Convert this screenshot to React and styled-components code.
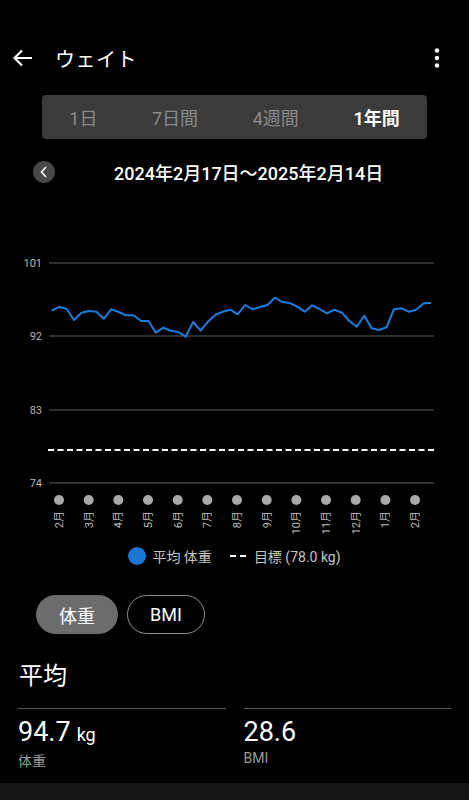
import { createGlobalStyle, styled } from "styled-components";

const GlobalStyle = createGlobalStyle`
    html, body {
        margin: 0;
        padding: 0;
        background: #000;
    }
    body {
        font-family: Roboto, "Noto Sans CJK JP", "Noto Sans", sans-serif;
        color: #fff;
    }
`

const Screen = styled.div`
    width: 469px;
    height: 800px;
    background: #000;
    display: flex;
    flex-direction: column;
    overflow: hidden;
`

const Header = styled.header`
    display: flex;
    align-items: center;
    height: 56px;
    margin-top: 30px;
    padding: 0 21px 0 12px;
`

const IconButton = styled.div`
    display: flex;
    align-items: center;
    justify-content: center;
    width: 22px;
    height: 24px;
`

const Title = styled.h1`
    flex: 1;
    margin: 0 0 0 21px;
    font-size: 20px;
    font-weight: 400;
    letter-spacing: 0.5px;
`

const Segmented = styled.nav`
    display: flex;
    justify-content: space-around;
    align-items: center;
    height: 44px;
    margin: 9px 42px 0 42px;
    border-radius: 4px;
    background: #3b3b3b;
`

const Segment = styled.span`
    font-size: 18px;
    font-weight: ${props => (props.$active ? 600 : 400)};
    color: ${props => (props.$active ? "#fff" : "#8a8a8a")};
`

const DateRow = styled.div`
    display: flex;
    align-items: center;
    height: 24px;
    margin-top: 21px;
    padding-left: 33px;
`

const RoundButton = styled.div`
    display: flex;
    align-items: center;
    justify-content: center;
    width: 22px;
    height: 22px;
    border-radius: 50%;
    background: #484848;
`

const DateText = styled.span`
    margin-left: 59px;
    font-size: 18px;
    font-weight: 500;
    white-space: nowrap;
`

const Chart = styled.svg`
    display: block;
    margin-top: 46px;
`

const Legend = styled.div`
    display: flex;
    justify-content: center;
    align-items: center;
    gap: 6px;
    margin-top: 2px;
    font-size: 14px;
    color: #c4c4c4;
`

const LegendDot = styled.span`
    width: 18px;
    height: 18px;
    border-radius: 50%;
    background: #1976d2;
`

const LegendDash = styled.span`
    width: 16px;
    height: 0;
    margin-left: 12px;
    margin-right: 2px;
    border-top: 2px dashed #fff;
`

const Chips = styled.div`
    display: flex;
    gap: 9px;
    margin-top: 29px;
    padding-left: 36px;
`

const Chip = styled.div`
    display: flex;
    align-items: center;
    justify-content: center;
    box-sizing: border-box;
    width: ${props => props.$width}px;
    height: 39px;
    border-radius: 20px;
    font-size: 18px;
    background: ${props => (props.$active ? "#6c6c6c" : "transparent")};
    border: 1px solid ${props => (props.$active ? "#6c6c6c" : "#8f8f8f")};
`

const SectionTitle = styled.h2`
    margin: 25px 0 0 19px;
    font-size: 24px;
    font-weight: 400;
    line-height: 34px;
`

const Stats = styled.div`
    display: grid;
    grid-template-columns: 1fr 1fr;
    gap: 18px;
    margin-top: 15px;
    padding: 0 18px;
`

const Stat = styled.div`
    border-top: 1px solid #555;
    padding-top: 6px;
`

const StatValue = styled.div`
    font-size: 27px;
    line-height: 34px;
    span {
        margin-left: 6px;
        font-size: 18px;
    }
`

const StatLabel = styled.div`
    font-size: 14px;
    color: #9a9a9a;
    line-height: 18px;
`

const BottomBar = styled.div`
    margin-top: auto;
    height: 17px;
    background: #131313;
`

// weekly averages traced from the reference (page y coordinates)
const zs = [212, 201, 206, 240, 218, 213, 215, 236, 208, 216, 226, 226, 243, 243, 278, 263, 272, 276, 290, 246, 272, 245, 224, 215, 209, 223, 195, 208, 201, 195, 173, 186, 189, 200, 215, 196, 207, 220, 209, 218, 243, 260, 227, 265, 270, 262, 208, 205, 215, 209, 190, 189]
const TOP = 230
const points = zs.map((z, i) => `${(51.7 + i * 7.44).toFixed(1)},${(240 + z / 3 - TOP).toFixed(1)}`).join(" ")

const grid = [
    { label: "101", y: 263 },
    { label: "92", y: 336 },
    { label: "83", y: 410 },
    { label: "74", y: 483 },
]

const months = ["2月", "3月", "4月", "5月", "6月", "7月", "8月", "9月", "10月", "11月", "12月", "1月", "2月"]

const WeightChart = () => (
    <Chart width="469" height="314" viewBox="0 0 469 314">
        {grid.map(g => (
            <g key={g.label}>
                <line x1="49" x2="434" y1={g.y - TOP} y2={g.y - TOP} stroke="#3e3e3e" strokeWidth="1.5" />
                <text x="42" y={g.y - TOP + 4} textAnchor="end" fontSize="11" fill="#b4b4b4" fontFamily="Roboto, sans-serif">{g.label}</text>
            </g>
        ))}
        <line x1="48" x2="434" y1={450 - TOP} y2={450 - TOP} stroke="#fff" strokeWidth="2" strokeDasharray="6 3.5" />
        <polyline points={points} fill="none" stroke="#1a7ddb" strokeWidth="2" strokeLinejoin="round" />
        {months.map((m, i) => {
            const x = 59 + i * 29.67
            return (
                <g key={i}>
                    <circle cx={x} cy={500 - TOP} r="5" fill="#a9a9a9" />
                    <text
                        transform={`translate(${x + 4}, ${511 - TOP}) rotate(-90)`}
                        textAnchor="end"
                        fontSize="11"
                        fill="#bdbdbd"
                        fontFamily="Roboto, 'Noto Sans CJK JP', sans-serif"
                    >
                        {m}
                    </text>
                </g>
            )
        })}
    </Chart>
)

const App = () => {
    return (
        <Screen>
            <GlobalStyle />
            <Header>
                <IconButton>
                    <svg width="20" height="18" viewBox="0 0 20 18">
                        <path d="M19 9H2M9 1.5L1.5 9L9 16.5" fill="none" stroke="#fff" strokeWidth="2.2" />
                    </svg>
                </IconButton>
                <Title>ウェイト</Title>
                <IconButton>
                    <svg width="6" height="20" viewBox="0 0 6 20">
                        <circle cx="3" cy="2.5" r="2.2" fill="#fff" />
                        <circle cx="3" cy="10" r="2.2" fill="#fff" />
                        <circle cx="3" cy="17.5" r="2.2" fill="#fff" />
                    </svg>
                </IconButton>
            </Header>

            <Segmented>
                <Segment>1日</Segment>
                <Segment>7日間</Segment>
                <Segment>4週間</Segment>
                <Segment $active>1年間</Segment>
            </Segmented>

            <DateRow>
                <RoundButton>
                    <svg width="10" height="12" viewBox="0 0 10 12">
                        <path d="M7 1L2.5 6L7 11" fill="none" stroke="#fff" strokeWidth="1.6" />
                    </svg>
                </RoundButton>
                <DateText>2024年2月17日～2025年2月14日</DateText>
            </DateRow>

            <WeightChart />

            <Legend>
                <LegendDot />
                <span>平均 体重</span>
                <LegendDash />
                <span>目標 (78.0 kg)</span>
            </Legend>

            <Chips>
                <Chip $active $width={82}>体重</Chip>
                <Chip $width={78}>BMI</Chip>
            </Chips>

            <SectionTitle>平均</SectionTitle>

            <Stats>
                <Stat>
                    <StatValue>94.7<span>kg</span></StatValue>
                    <StatLabel>体重</StatLabel>
                </Stat>
                <Stat>
                    <StatValue>28.6</StatValue>
                    <StatLabel>BMI</StatLabel>
                </Stat>
            </Stats>

            <BottomBar />
        </Screen>
    )
}

export default App;
